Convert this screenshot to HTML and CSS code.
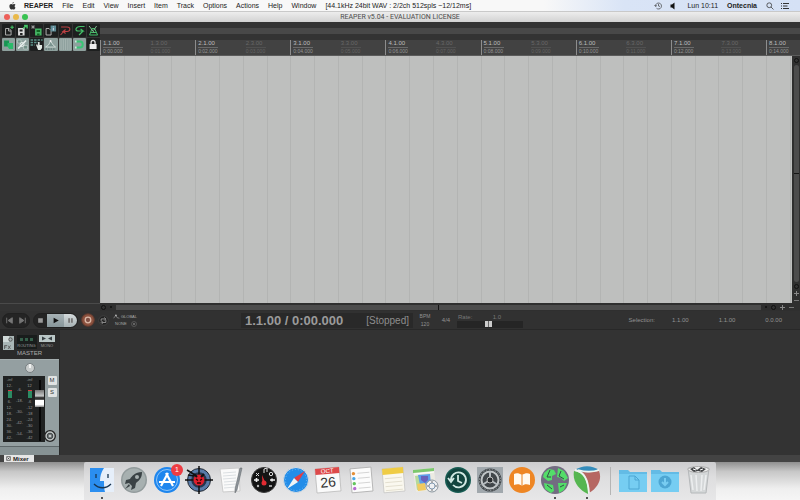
FILE: index.html
```html
<!DOCTYPE html>
<html lang="en">
<head>
<meta charset="utf-8">
<title>REAPER v5.04 - EVALUATION LICENSE</title>
<link rel="stylesheet" href="styles.css">
</head>
<body>
<header class="menubar">
  <svg class="apple" viewBox="0 0 14 16" aria-hidden="true"><path fill="#333" d="M9.6 0c.1 1.600-1.200 3-2.800 3.100C6.700 1.500 8.100.2 9.600 0zM12.800 11.600c-.8 1.900-1.900 3.600-3.100 3.600-.9 0-1.300-.6-2.500-.6s-1.600.6-2.500.6C2.900 15.200.8 11.700.8 8.500c0-2.700 1.700-4.400 3.600-4.400 1.100 0 2 .7 2.800.7.700 0 1.800-.8 3.100-.8 1 0 2 .5 2.700 1.400-2.500 1.500-2.200 5 .3 6z"/></svg>
  <nav class="menus">
    <button class="app-name">REAPER</button><button>File</button><button>Edit</button><button>View</button><button>Insert</button><button>Item</button><button>Track</button><button>Options</button><button>Actions</button><button>Help</button><button>Window</button><button>[44.1kHz 24bit WAV : 2/2ch 512spls ~12/12ms]</button>
  </nav>
  <div class="status">
    <svg viewBox="0 0 16 16" aria-hidden="true"><path d="M3 8a6 6 0 1 1 2 4.500M1 6l2 3 3-2M9 4v4l3 1" fill="none" stroke="#333" stroke-width="1.300"/></svg>
    <svg viewBox="0 0 16 16" aria-hidden="true"><path d="M3 5h3l5-4v14l-5-4H3z" fill="#111"/></svg>
    <span class="clock">Lun 10:11</span>
    <strong>Ontecnia</strong>
    <svg class="search" viewBox="0 0 16 16" aria-hidden="true"><g fill="none" stroke="#333" stroke-width="1.500"><circle cx="6.500" cy="6.500" r="4.800"/><path d="M10 10l5 5"/></g></svg>
    <svg viewBox="0 0 16 16" aria-hidden="true"><path d="M0 3h2M4 3h12M0 8h2M4 8h9M0 13h2M4 13h12" stroke="#333" stroke-width="2"/></svg>
  </div>
</header>

<main class="window">
  <div class="titlebar">
    <div class="lights"><button class="red" aria-label="Close"></button><button class="yellow" aria-label="Minimize"></button><button class="green" aria-label="Zoom"></button></div>
    <h1>REAPER v5.04 - EVALUATION LICENSE</h1>
  </div>

  <div class="workspace">
    <aside class="tracks">
      <div class="toolbar">
        <button aria-label="New project"><svg viewBox="0 0 26 26"><path d="M7 9h7l4 4v9H7zM13 9v5h5" fill="none" stroke="#bbb" stroke-width="1.800"/><path d="M20 3v7M16.500 6.500h7" stroke="#45c465" stroke-width="2.200"/></svg></button>
        <button aria-label="Open project"><svg viewBox="0 0 26 26"><path d="M4 8h13v15H4z" fill="#ddd"/><path d="M7 11h6v4H7zM8 18h5v4H8z" fill="#222"/><path d="M14 9l7-6M16 3h6v6" fill="none" stroke="#45c465" stroke-width="3"/></svg></button>
        <button aria-label="Save project"><svg viewBox="0 0 26 26"><path d="M10 9h13v14H10z" fill="#45b465"/><path d="M13 12h7v4h-7zM14 19h5v4h-5z" fill="#162"/><path d="M2 6h8M6 2v8M3 3l6 6M9 3L3 9" stroke="#bbb" stroke-width="1.200"/></svg></button>
        <button aria-label="Project settings"><svg viewBox="0 0 26 26"><path d="M4 9h6l4 4v9H4z" fill="none" stroke="#bbb" stroke-width="1.800"/><path d="M13 3h11v12H13z" fill="#5d8c96"/><path d="M18.500 5v1.500M18.500 8v5" stroke="#dde" stroke-width="2"/></svg></button>
        <button aria-label="Undo"><svg viewBox="0 0 26 26"><path d="M4 6h12c8 0 7 9 0 9H8l5-4M8 15l5 4M3 22l6-7" fill="none" stroke="#bd4143" stroke-width="2.200"/></svg></button>
        <button aria-label="Redo"><svg viewBox="0 0 26 26"><path d="M23 5h-9C5 5 3 14 10 14h10l-5-4M20 14l-8 8" fill="none" stroke="#43bd68" stroke-width="2.400"/></svg></button>
        <button aria-label="Metronome"><svg viewBox="0 0 26 26"><path d="M5 22l5-13h5l6 13zM8 17h11" fill="none" stroke="#43bd68" stroke-width="2"/><path d="M4 4l10 13M19 4l-6 9" stroke="#8fcf9f" stroke-width="1.800"/></svg></button>
        <button class="on" aria-label="Auto-crossfade"><svg viewBox="0 0 26 26"><path d="M4 5h10v12H4z" fill="#189553"/><path d="M11 10h11v12H14l-3-5z" fill="#2ab96a"/></svg></button>
        <button class="on" aria-label="Item grouping"><svg viewBox="0 0 26 26"><path d="M4 21L20 5" stroke="#edf3f1" stroke-width="3"/><path d="M3 4h7v6H3zM15 15h8v7h-8z" fill="#729087" stroke="#d6e1de"/><circle cx="12" cy="13" r="4" fill="none" stroke="#e5eeeb" stroke-width="2"/></svg></button>
        <button aria-label="Ripple editing"><svg viewBox="0 0 26 26"><path d="M1 4h24M1 9h15M1 14h8" stroke="#5b938a" stroke-width="3" stroke-dasharray="5 2"/><path d="M12 14l2-2 2 4V8h3v6h5v6l-3 4h-5z" fill="#e1e9e4"/></svg></button>
        <button class="on" aria-label="Move envelope points"><svg viewBox="0 0 26 26"><path d="M3 18l6-4 4-8 5 8 5 4z" fill="#79928e" stroke="#e1eae6" stroke-width="1.500"/><path d="M3 22h20" stroke="#526b68" stroke-width="2" stroke-dasharray="3 2"/><circle cx="13" cy="6" r="2" fill="#eee"/></svg></button>
        <button class="on" aria-label="Grid lines"><svg viewBox="0 0 26 26"><path d="M4 2v22M8.500 2v22M13 2v22M17.500 2v22M22 2v22" stroke="#b5c3bf" stroke-width="1.200"/></svg></button>
        <button class="on" aria-label="Snap"><svg viewBox="0 0 26 26"><path d="M5 7h9c7 0 7 12 0 12H5" fill="none" stroke="#38c474" stroke-width="4"/><path d="M4 7h3M4 19h3" stroke="#d8eee0" stroke-width="4"/></svg></button>
        <button aria-label="Lock"><svg viewBox="0 0 26 26"><path d="M8 13V9c0-6 8-6 8 0v4" fill="none" stroke="#ddd" stroke-width="2.500"/><path d="M5 12h14v10H5z" fill="#eee"/></svg></button>
      </div>
    </aside>

    <section class="arrange">
      <div class="region-strip"></div>
      <div class="ruler">
        <div class="tick"><span>1.1.00</span><small>0:00.000</small></div><div class="tick half"><span>1.3.00</span><small>0:01.000</small></div>
        <div class="tick"><span>2.1.00</span><small>0:02.000</small></div><div class="tick half"><span>2.3.00</span><small>0:03.000</small></div>
        <div class="tick"><span>3.1.00</span><small>0:04.000</small></div><div class="tick half"><span>3.3.00</span><small>0:05.000</small></div>
        <div class="tick"><span>4.1.00</span><small>0:06.000</small></div><div class="tick half"><span>4.3.00</span><small>0:07.000</small></div>
        <div class="tick"><span>5.1.00</span><small>0:08.000</small></div><div class="tick half"><span>5.3.00</span><small>0:09.000</small></div>
        <div class="tick"><span>6.1.00</span><small>0:10.000</small></div><div class="tick half"><span>6.3.00</span><small>0:11.000</small></div>
        <div class="tick"><span>7.1.00</span><small>0:12.000</small></div><div class="tick half"><span>7.3.00</span><small>0:13.000</small></div>
        <div class="tick"><span>8.1.00</span><small>0:14.000</small></div>
      </div>
      <div class="canvas"></div>
      <div class="vscroll"><i class="knob"></i><div class="vthumb"></div><i class="knob"></i><b class="plus"></b><b class="minus"></b></div>
      <div class="hscroll"><i class="knob"></i><i class="point"></i><div class="hthumb"></div><i class="point"></i><i class="knob"></i><b class="plus"></b><b class="minus"></b></div>
    </section>
  </div>

  <section class="transport">
    <div class="pill skip">
      <button aria-label="Go to start"><svg viewBox="0 0 14 14"><path d="M4 4v6M10 4L5.500 7l4.500 3z" fill="#777" stroke="#777"/></svg></button>
      <button aria-label="Go to end"><svg viewBox="0 0 14 14"><path d="M10 4v6M4 4l4.500 3L4 10z" fill="#777" stroke="#777"/></svg></button>
    </div>
    <div class="pill play">
      <button aria-label="Stop"><svg viewBox="0 0 14 14"><path d="M4.500 4.500h5v5h-5z" fill="#999"/></svg></button>
      <button class="lit wide" aria-label="Play"><svg viewBox="0 0 14 14"><path d="M5 4l5.500 3L5 10z" fill="#111"/></svg></button>
      <button class="lit" aria-label="Pause"><svg viewBox="0 0 14 14"><path d="M4.500 4.500h2v5h-2zM7.500 4.500h2v5h-2z" fill="#777"/></svg></button>
    </div>
    <button class="record" aria-label="Record"><svg viewBox="0 0 14 14"><circle cx="7" cy="7" r="6.300" fill="#8c513e" stroke="#5e392e"/><circle cx="7" cy="7" r="2.800" fill="#805044" stroke="#dab8a7" stroke-width="1.300"/></svg></button>
    <button class="repeat" aria-label="Repeat"><svg viewBox="0 0 14 14"><circle cx="7" cy="7" r="6" fill="#1f1f1f" stroke="#4a4a4a"/><path d="M4 8V5h5M10 6v3.500H5M8 3l2 2-2 2M6 7.500l-2 2 2 2" fill="none" stroke="#aaa"/></svg></button>
    <div class="auto">
      <span><svg viewBox="0 0 12 8"><path d="M1 7l4-5 2 4 4 1" fill="none" stroke="#aaa"/><circle cx="5" cy="2" r="1.500" fill="#bbb"/></svg>GLOBAL</span>
      <span>NONE<svg class="dial" viewBox="0 0 12 12"><circle cx="6" cy="6" r="5" fill="none" stroke="#777"/><path d="M4 4l4 4M8 4L4 8" stroke="#999"/></svg></span>
    </div>
    <div class="display"><output class="time">1.1.00 / 0:00.000</output><output class="state">[Stopped]</output></div>
    <div class="bpm"><label for="bpm">BPM</label><input id="bpm" value="120"></div>
    <button class="sig">4/4</button>
    <div class="rate"><label for="rate"><span>Rate:</span><span>1.0</span></label><input id="rate" type="range" min="0" max="100" value="47"></div>
    <div class="selection"><span>Selection:</span><span>1.1.00</span><span>1.1.00</span><span>0.0.00</span></div>
  </section>

  <section class="mixer">
    <div class="master">
      <div class="master-top">
        <button class="fx" aria-label="FX"><svg viewBox="0 0 11 14"><path d="M0 0h11v14H0z" fill="#a9b6b6"/><path d="M0 0h6v6H0z" fill="#d0d9d8"/><circle cx="7.500" cy="3.500" r="1.700" fill="none" stroke="#555"/><path d="M1.500 13V9.500h2.500M1.500 11h2M5 9.500L7.500 13M7.500 9.500L5 13" fill="none" stroke="#555" stroke-width=".8"/></svg></button>
        <button class="routing"><span><i></i><i></i><i></i></span>ROUTING</button>
        <button class="mono"><svg viewBox="0 0 16 8"><path d="M0 0h16v7H0z" fill="#bac7c7"/><path d="M3 1.500v4l4-2zM13 1.500v4l-4-2z" fill="#384144"/></svg>MONO</button>
      </div>
      <h2>MASTER</h2>
      <div class="strip">
        <svg class="pan" viewBox="0 0 10 10" aria-hidden="true"><circle cx="5" cy="5" r="4.500" fill="#c9cdcd" stroke="#777e80"/><path d="M5 1v4" stroke="#fff" stroke-width="1.500"/></svg>
        <div class="strip-body">
          <div class="meter">
            <div class="scale side"><span>-inf</span><span>12-</span><i></i><span>6-</span><span>12-</span><span>18-</span><span>24-</span><span>30-</span><span>36-</span><span>42-</span></div>
            <div class="scale mid"><span>-6-</span><span>-18-</span><span>-30-</span><span>-42-</span><span>-54-</span></div>
            <div class="scale side"><span>-inf</span><span>12</span><i></i><span>-6</span><span>-12</span><span>-18</span><span>-24</span><span>-30</span><span>-36</span><span>-42</span></div>
            <div class="fader"><div class="cap"></div></div>
          </div>
          <div class="side-buttons"><button>M</button><button>S</button>
            <svg class="env" viewBox="0 0 12 12" aria-hidden="true"><circle cx="6" cy="6" r="5.300" fill="#c1c6c6" stroke="#222" stroke-width="1.300"/><circle cx="6" cy="6" r="2.800" fill="#747b7c" stroke="#3b4042"/><circle cx="6" cy="6" r="1" fill="#ddd"/></svg>
          </div>
        </div>
      </div>
      <div class="foot"></div>
    </div>
  </section>
  <footer class="tabs"><button><svg viewBox="0 0 8 8"><path d="M1 1h6v6H1zM2.500 2.500l3 3M5.500 2.500l-3 3" fill="none" stroke="#333"/></svg>Mixer</button></footer>
</main>

<div class="desktop">
  <nav class="dock">
    <a class="open" href="#" aria-label="Finder"><svg viewBox="0 0 28 28"><path d="M2 2h24v24H2z" fill="#e6effa"/><path d="M2 2h14c-3 4-4 9-4 13h4c0 4 0 8 1 11H2z" fill="#2b8ef0"/><path d="M8 8v4M20 8v4M6 18c5 5 12 5 17 0" fill="none" stroke="#173653" stroke-width="1.300"/></svg></a>
    <a href="#" aria-label="Launchpad"><svg viewBox="0 0 28 28"><circle cx="14" cy="14" r="13" fill="#929b9c"/><circle cx="14" cy="14" r="11.500" fill="#a7b0b0"/><path d="M22 6c-7 0-10 4-12 7l-4 1-1 4 4-1 3 3-1 4 4-2 1-5c4-3 6-6 6-11z" fill="#3a4245"/><circle cx="17" cy="11" r="2" fill="#a7b0b0"/><path d="M9 18l-4 5 5-3z" fill="#3a4245"/></svg></a>
    <a href="#" aria-label="App Store"><svg viewBox="0 0 28 28"><circle cx="14" cy="14" r="13" fill="#1e86ee"/><circle cx="14" cy="14" r="10.500" fill="none" stroke="#8fc5f7"/><path d="M8 20l7-13M13 7l7 13M6 16h16" stroke="#fff" stroke-width="2.200"/></svg><span class="badge">1</span></a>
    <a href="#" aria-label="Target"><svg viewBox="0 0 28 28"><circle cx="14" cy="14" r="9.500" fill="#26354c" stroke="#587ba8" stroke-width="3.500"/><circle cx="14" cy="14" r="11.500" fill="none" stroke="#17202c"/><path d="M14 0v28M0 14h28M2 4l8 5M3 9l6 1" stroke="#111" stroke-width="1.500"/><circle cx="14" cy="14" r="5.500" fill="#dd1f2c"/><path d="M9 8l3 3M19 8l-3 3" stroke="#111" stroke-width="2"/><path d="M11 13l2 1.500M17 13l-2 1.500M12 17h4" stroke="#300" stroke-width="1.300"/></svg></a>
    <a href="#" aria-label="TextEdit"><svg viewBox="0 0 28 28"><path d="M3 3l19-1 1 23-17 1z" fill="#fafafa" stroke="#ccc"/><path d="M6 7l13-1M6 10l13-1M6 13l13-1M7 16l12-1M7 19l12-1M7 22l12-1" stroke="#d3d8dc" stroke-width=".8"/><path d="M25 2l-5 22-2 3v-4l5-21z" fill="#8d9399" stroke="#5c6267" stroke-width=".5"/></svg></a>
    <a href="#" aria-label="Dashboard"><svg viewBox="0 0 28 28"><circle cx="14" cy="14" r="12.500" fill="#141414" stroke="#3c3c3c"/><circle cx="14" cy="17" r="2.500" fill="#e22b32"/><path d="M12.500 17l-.5-8 3.500 8z" fill="#e22b32"/><path d="M4 14h5M6.500 12v4M20 14h5M22 12.500v3" stroke="#eee" stroke-width="1.600"/><path d="M14 7V3l3-1v4M6 7l3 3M9 7L6 10" fill="none" stroke="#ddd"/><circle cx="21" cy="8" r="1.700" fill="none" stroke="#ddd"/><circle cx="8" cy="20" r="1.200" fill="#bbb"/><path d="M19 19h3v2h-3z" fill="#999"/></svg></a>
    <a href="#" aria-label="Safari"><svg viewBox="0 0 28 28"><circle cx="14" cy="14" r="12.500" fill="#238de8" stroke="#d6dce1"/><circle cx="14" cy="14" r="10.500" fill="none" stroke="#72baf2" stroke-dasharray="1 2"/><path d="M23 5l-7 11-4-4z" fill="#e33d42"/><path d="M5 23l7-11 4 4z" fill="#f1f4f6"/></svg></a>
    <a href="#" aria-label="Calendar"><svg viewBox="0 0 28 28"><g transform="rotate(-5 14 14)"><path d="M2 2h24v24H2z" fill="#fafafa" stroke="#aaa" stroke-width=".6"/><path d="M2 2h24v6H2z" fill="#dd4a4b"/><text class="cal-month" x="14" y="7">OCT</text><text class="cal-day" x="14" y="21">26</text></g></svg></a>
    <a href="#" aria-label="Reminders"><svg viewBox="0 0 28 28"><g transform="rotate(-5 14 14)"><path d="M4 2h21v24H4z" fill="#fcfcfc" stroke="#aaa" stroke-width=".8"/><path d="M11 7h12M11 12h12M11 17h12M11 22h12" stroke="#ccc" stroke-width=".8"/><circle cx="7" cy="7" r="1.700" fill="#e58f37"/><circle cx="7" cy="12" r="1.700" fill="#47a6e8"/><circle cx="7" cy="17" r="1.700" fill="#63c65c"/><circle cx="7" cy="22" r="1.700" fill="#b768d0"/></g></svg></a>
    <a href="#" aria-label="Notes"><svg viewBox="0 0 28 28"><g transform="rotate(-5 14 14)"><path d="M4 2h21v24H4z" fill="#faf8ef" stroke="#bbb" stroke-width=".6"/><path d="M4 2h21v6H4z" fill="#efcc45"/><path d="M6 12h17M6 16h17M6 20h17M6 24h17" stroke="#ded9c9" stroke-width=".8"/></g></svg></a>
    <a href="#" aria-label="Maps"><svg viewBox="0 0 28 28"><path d="M2 4l21-2 2 22-20 2z" fill="#ecebe2"/><path d="M2 4l21-2v3L2 7z" fill="#7cc86e"/><path d="M4 10l8-1 2 14-8 1z" fill="#b5d99b"/><path d="M7 9l12-1 1 10-11 1z" fill="#5d9ee9"/><path d="M6 18l8-1 1 7-8 1z" fill="#f0ca5f"/><path d="M10 10h7v4l-3 3-4-3z" fill="#6a62bb"/><path d="M3 8l20-2" stroke="#fff"/><circle cx="21" cy="20" r="6" fill="#eef0f2" stroke="#8b969e"/><circle cx="21" cy="20" r="3" fill="none" stroke="#819ab1"/><path d="M21 15v2M21 23v2M16 20h2M24 20h2" stroke="#777"/></svg></a>
    <a href="#" aria-label="Time Machine"><svg viewBox="0 0 28 28"><circle cx="14" cy="14" r="13" fill="#185d54"/><circle cx="14" cy="14" r="11.500" fill="#12453f"/><path d="M7 14a7.500 7.500 0 1 1 2 5M4 12l3 4 3-4M14 9v6l4 2" fill="none" stroke="#d2e9e4" stroke-width="1.800"/></svg></a>
    <a href="#" aria-label="System Preferences"><svg viewBox="0 0 28 28"><path d="M1 1h26v26H1z" fill="#a1a8ad"/><circle cx="14" cy="14" r="11.500" fill="#41464a"/><circle cx="14" cy="14" r="8.500" fill="none" stroke="#c1c5c7" stroke-width="2"/><circle cx="14" cy="14" r="10.500" fill="none" stroke="#999fa3" stroke-dasharray="1.500 1.500"/><path d="M14 14V5M14 14l8 5M14 14l-8 5" stroke="#b7bcc0" stroke-width="2"/><circle cx="14" cy="14" r="3" fill="#292c2f" stroke="#bbb"/></svg></a>
    <a href="#" aria-label="iBooks"><svg viewBox="0 0 28 28"><circle cx="14" cy="14" r="13" fill="#ee8624"/><path d="M14 9c-3-2-6-2-8-1v11c3-1 6-1 8 1 2-2 5-2 8-1V8c-2-1-5-1-8 1z" fill="#fffaf1"/><path d="M14 9v11" stroke="#e88322"/></svg></a>
    <a class="open" href="#" aria-label="Globe"><svg viewBox="0 0 28 28"><circle cx="14" cy="14" r="14" fill="#726c81"/><path d="M3 7l5-4 5 1 2 4-4 2v4l-4 1-5-4zM17 2l6 3 4 7-4 3-3-3-4-1zM3 17l9 2 1 6-3 2-6-4zM17 17l9 0-3 7-5 3z" fill="#53dd69"/><path d="M9 4l-3 7h4M20 5l-2 5 5 3M6 19l5 4M19 21l4-2" fill="none" stroke="#344f48"/></svg></a>
    <a class="open" href="#" aria-label="REAPER"><svg viewBox="0 0 28 28"><path d="M3 4C8-1 20-1 25 4c-4 3-13 3-22 0z" fill="#348cbb"/><path d="M1 5c9 1 14 8 14 23C6 24-1 15 1 5z" fill="#55b650"/><path d="M9 6c6 1 12 0 17-1 3 7 0 16-10 22 0-9-2-16-7-21z" fill="#b66762"/><path d="M2 4c9 2 13 9 14 23M5 4c7 2 15 2 21 0" fill="none" stroke="#edf5ef" stroke-width="1.800"/></svg></a>
    <span class="divider"></span>
    <a href="#" aria-label="Documents"><svg class="folder" viewBox="0 0 30 28"><path d="M1 4h9l2 2h17v20H1z" fill="#63bbe5"/><path d="M1 8h28v18H1z" fill="#76cdf2"/><path d="M11 10h6l4 4v9H11zM17 10v4h4" fill="none" stroke="#4da6d3"/></svg></a>
    <a href="#" aria-label="Downloads"><svg class="folder" viewBox="0 0 30 28"><path d="M1 4h9l2 2h17v20H1z" fill="#63bbe5"/><path d="M1 8h28v18H1z" fill="#76cdf2"/><circle cx="15" cy="16" r="6.500" fill="#4da6d3"/><path d="M15 12v7M12 16l3 3 3-3" fill="none" stroke="#78cdf1" stroke-width="2"/></svg></a>
    <a href="#" aria-label="Trash"><svg viewBox="0 0 28 28"><path d="M4 2h21l-3 25H7z" fill="#d4d7d8" stroke="#b5b8ba"/><path d="M7 9l2 15M12 9l1 16M18 9l-1 16M22 9l-2 15" stroke="#eceeef" stroke-width="1.500"/><ellipse cx="14.500" cy="3.500" rx="10.500" ry="3" fill="#eee" stroke="#aaa"/><path d="M6 3l4-2 3 3 4-3 5 2-4 3-4-1-4 1z" fill="#454749"/><path d="M9 3l3 1M16 4l3-1" stroke="#fff"/></svg></a>
  </nav>
</div>
</body>
</html>
```
FILE: styles.css
```css
* { box-sizing: border-box; }

body {
  margin: 0;
  min-height: 100vh;
  display: flex;
  flex-direction: column;
  background: #e4e4e4;
  font-family: "Liberation Sans", Arial, sans-serif;
  font-size: 7px;
  line-height: 8px;
  overflow: hidden;
}

button, input {
  margin: 0;
  padding: 0;
  border: 0;
  background: none;
  color: inherit;
  font: inherit;
}

svg { display: block; }

/* System menu bar */
.menubar {
  display: flex;
  align-items: center;
  height: 11px;
  padding: 0 11px 0 9px;
  background: linear-gradient(90deg, #f8f8f8 0 68%, #d9e4f6 78%, #d5e1f5);
  color: #222;
}
.apple { width: 7px; height: 8px; }
.menus { display: flex; gap: 9px; margin-left: 8px; white-space: nowrap; }
.app-name { font-weight: bold; }
.status { display: flex; align-items: center; gap: 7px; margin-left: auto; white-space: nowrap; }
.status svg { width: 8px; height: 8px; }
.status strong { margin: 0 2px; }
.status .clock { margin-left: 3px; }

/* Window frame */
.window { flex: 1; display: flex; flex-direction: column; background: #333; }
.titlebar {
  position: relative;
  height: 11px;
  display: flex;
  align-items: center;
  justify-content: center;
  background: linear-gradient(#ededed, #d2d2d2);
  border-top: 1px solid #c9c9c9;
}
.titlebar h1 { margin: 0; font-family: Roboto, sans-serif; font-size: 7px; font-weight: normal; color: #4c4c4c; }
.lights { position: absolute; left: 4px; top: 2px; display: flex; gap: 3px; }
.lights button { width: 6px; height: 6px; border-radius: 50%; }
.red { background: #ed5f59; }
.yellow { background: #e9b94a; }
.green { background: #38c251; }

.workspace { flex: 1; display: grid; grid-template-columns: 100px minmax(0, 1fr); }
.tracks { margin-bottom: 7px; border-bottom: 1px solid #4a4a4a; }
.toolbar {
  display: grid;
  grid-template-columns: repeat(7, 1fr);
  gap: 1px;
  padding: 2px 0 0 2px;
}
.toolbar button { height: 13px; background: #1d1f1f; border-radius: 1px; overflow: hidden; }
.toolbar button.on { background: #8ea19e; }
.toolbar svg { width: 100%; height: 13px; }

/* Timeline */
.arrange {
  display: grid;
  grid-template-columns: minmax(0, 1fr) 8px;
  grid-template-rows: 18px 16px minmax(0, 1fr) 8px;
}
.region-strip { grid-column: 1 / 3; margin: 6px 0; background: #484848; }
.ruler {
  grid-column: 1 / 3;
  display: grid;
  grid-template-columns: repeat(14, minmax(0, 11fr)) minmax(0, 6fr);
  padding-right: 8px;
  background: #424242;
  border-bottom: 1px solid #5b5b5b;
}
.tick {
  height: 15px;
  padding: 0 0 0 2px;
  border-left: 1px solid #8d8d8d;
  color: #bdbdbd;
  font-size: 6px;
  line-height: 7px;
  white-space: nowrap;
}
.tick span { display: block; width: 20px; border-bottom: 1px solid #6a6a6a; }
.tick small { display: block; font-size: 5px; line-height: 6px; color: #959595; }
.tick.half { border-color: transparent; color: #686868; }
.tick.half span { border-color: #505050; }
.tick.half small { color: #646464; }
.canvas {
  background: repeating-linear-gradient(90deg, #b3b4b3 0 1px, #bebfbe 1px 3.4375%);
}
.vscroll { display: flex; flex-direction: column; align-items: center; gap: 2px; padding: 2px 0 0; background: #2f2f2f; }
.vthumb {
  flex: 1;
  width: 5px;
  border-radius: 3px;
  background: linear-gradient(#151515, #151515) center / 5px 1px no-repeat #4c4c4c;
}
.hscroll { grid-column: 1 / 3; display: flex; align-items: center; gap: 4px; padding: 0 6px 0 1px; background: #2f2f2f; }
.hthumb {
  flex: 1;
  height: 5px;
  background: linear-gradient(#151515, #151515) center / 1px 5px no-repeat #4c4c4c;
}
.knob { width: 5px; height: 5px; border: 1px solid #101010; border-radius: 50%; background: #333; }
.point { width: 2px; height: 2px; border-radius: 50%; background: #111; }
.plus, .minus { width: 5px; height: 5px; background: linear-gradient(#777, #777) center / 5px 1px no-repeat; }
.plus { background: linear-gradient(#888, #888) center / 5px 1px no-repeat, linear-gradient(#888, #888) center / 1px 5px no-repeat; }

/* Transport */
.transport {
  display: flex;
  align-items: center;
  height: 19px;
  padding: 0 0 0 2px;
  background: #313131;
  border-bottom: 1px solid #282828;
  color: #929292;
  font-size: 6px;
  white-space: nowrap;
}
.pill { display: flex; border-radius: 8px; overflow: hidden; background: #242424; border: 1px solid #202020; }
.pill button { width: 13px; height: 13px; }
.pill svg { width: 100%; height: 13px; }
.pill .lit { background: linear-gradient(#a7b2b5, #87969a); }
.pill .lit + .lit { background: linear-gradient(#d4dadb, #a6b1b4); }
.pill .wide { width: 17px; }
.play { margin-left: 3px; }
.record { margin-left: 3px; }
.record svg { width: 14px; height: 14px; }
.repeat { margin-left: 3px; }
.repeat svg { width: 11px; height: 11px; }
.auto { margin-left: 4px; font-size: 4px; line-height: 6px; width: 26px; color: #aaa; }
.auto span { display: flex; align-items: center; gap: 1px; height: 7px; }
.auto span + span { justify-content: space-between; padding: 0 2px; }
.auto svg { width: 7px; height: 5px; }
.auto .dial { width: 6px; height: 6px; }
.display {
  display: flex;
  align-items: center;
  justify-content: space-between;
  width: 172px;
  height: 15px;
  margin-left: 102px;
  padding: 0 4px;
  background: #292929;
}
.time { font-size: 13px; line-height: 15px; font-weight: bold; color: #9b9b9b; }
.state { font-size: 10px; line-height: 15px; color: #8e8e8e; }
.bpm { display: flex; flex-direction: column; align-items: center; width: 20px; margin-left: 2px; padding-bottom: 1px; font-size: 5px; }
.bpm input { width: 16px; height: 8px; text-align: center; }
.sig { width: 20px; margin-left: 1px; }
.rate { width: 66px; margin-left: 1px; }
.rate label { display: flex; justify-content: space-between; padding: 0 22px 0 1px; font-size: 6px; line-height: 8px; color: #777; }
.rate input {
  appearance: none;
  display: block;
  width: 100%;
  height: 7px;
  background: #252525;
}
.rate input::-webkit-slider-thumb {
  appearance: none;
  width: 7px;
  height: 6px;
  background: linear-gradient(90deg, #ccc 0 40%, #666 40% 60%, #ccc 60%);
}
.selection { display: flex; margin-left: auto; padding-right: 18px; gap: 30px; }
.selection span:first-child { margin-right: -13px; }

/* Mixer */
.mixer { height: 125px; display: flex; background: #333; }
.master { width: 60px; display: flex; flex-direction: column; background: #2a2a2a; border-right: 1px solid #292929; }
.master-top { display: flex; justify-content: space-between; padding: 5px 4px 0 3px; height: 20px; }
.fx svg { width: 11px; height: 14px; }
.routing, .mono { font-size: 4px; line-height: 6px; height: 14px; color: #9b9b9b; }
.routing { width: 20px; background: #191d1c; }
.routing span { display: flex; justify-content: space-around; height: 7px; padding: 2px; }
.routing i { width: 3px; height: 3px; background: #345f4a; }
.mono svg { width: 16px; height: 8px; }
.master h2 { margin: 0; height: 9px; font-size: 6px; line-height: 7px; font-weight: normal; text-align: center; color: #aaa; }
.strip { flex: 1; background: #949fa1; border-top: 1px solid #a4adae; padding: 3px 2px 2px 3px; }
.pan { width: 10px; height: 10px; margin: 0 auto; }
.strip-body { display: flex; gap: 2px; padding-top: 3px; }
.meter { display: flex; width: 43px; height: 66px; background: #202222; padding: 1px; color: #999; font-size: 4px; }
.scale { display: flex; flex-direction: column; line-height: 6px; text-align: center; }
.side { width: 11px; }
.side i { width: 4px; height: 9px; margin: 1px auto; background: #2c8a63; border-top: 1px solid #d0393d; }
.mid { width: 9px; padding-top: 7px; line-height: 11px; }
.fader { flex: 1; margin-top: 3px; background: linear-gradient(#080808, #080808) center / 2px 100% no-repeat; }
.cap { height: 17px; margin-top: 10px; background: linear-gradient(#777, #c6c8c8 35%, #333 45% 55%, #fff 60% 85%, #888); }
.side-buttons { width: 10px; display: flex; flex-direction: column; align-items: center; gap: 3px; }
.side-buttons button { width: 9px; height: 9px; background: #e0e3e3; color: #333; font-size: 6px; line-height: 9px; border-radius: 1px; }
.env { width: 12px; height: 12px; margin-top: auto; margin-left: -4px; }
.foot { height: 9px; background: #879294; border-top: 1px solid #5d6668; }
.tabs { height: 7px; background: #434343; padding-left: 4px; }
.tabs button { display: flex; align-items: center; gap: 2px; height: 7px; padding: 0 5px 0 2px; background: #e6e6e6; color: #222; font-size: 6px; line-height: 6px; font-weight: bold; }
.tabs svg { width: 5px; height: 5px; }

/* Dock */
.desktop { height: 38px; background: linear-gradient(#8f8f8f, #c7c7c7 25%, #efefef 70%, #f5f5f5); }
.dock {
  display: flex;
  width: 79%;
  height: 100%;
  margin: 0 auto;
  padding: 0 2px;
  background: linear-gradient(#cdcdcf, #dededf 40%, #e7e7e8);
  border-radius: 2px 2px 0 0;
}
.dock a {
  position: relative;
  flex: 1;
  display: flex;
  justify-content: center;
  padding-top: 4px;
  text-decoration: none;
}
.dock svg { flex: none; width: 28px; height: 28px; }
.dock svg.folder { width: 30px; }
.dock .open::after {
  content: "";
  position: absolute;
  bottom: 1px;
  left: 50%;
  width: 2px;
  height: 2px;
  margin-left: -1px;
  border-radius: 50%;
  background: #222;
}
.badge {
  position: absolute;
  top: 2px;
  right: 0;
  width: 12px;
  border-radius: 50%;
  background: #ed3c43;
  color: #fff;
  font-size: 7px;
  line-height: 12px;
  text-align: center;
}
.divider { width: 14px; background: linear-gradient(#b5b5b5, #b5b5b5) center / 1px 28px no-repeat; }
.cal-month { font-size: 6px; fill: #fff; text-anchor: middle; }
.cal-day { font-size: 14px; fill: #333; text-anchor: middle; }
```
